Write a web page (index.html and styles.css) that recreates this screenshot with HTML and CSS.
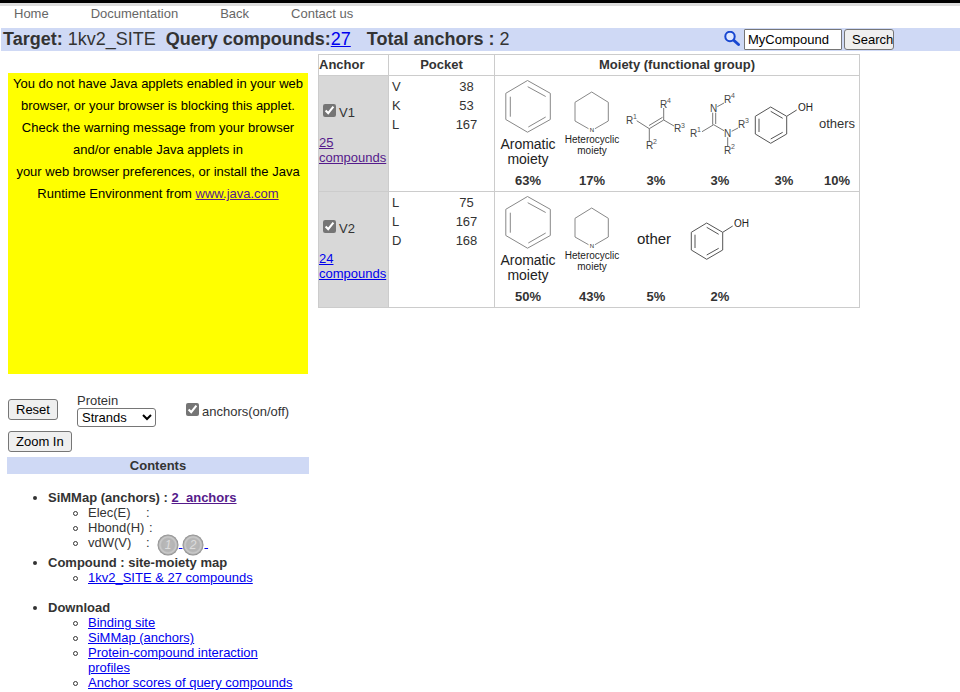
FILE: index.html
```html
<!DOCTYPE html>
<html lang="en">
<head>
<meta charset="utf-8">
<title>SiMMap - 1kv2_SITE</title>
<link rel="stylesheet" href="styles.css">
</head>
<body>
<svg class="defs" aria-hidden="true">
  <defs>
    <symbol id="aromatic" viewBox="0 0 64 90">
      <path class="bond light" d="M31.5 2.5 54.3 15.3V41.5L31.5 54.2 9.8 41.5V15.3ZM14.3 18.7v20M31.7 8.7 49.7 18.5M49.7 39 32.3 49"/>
      <text class="cap-lg" x="32" y="71">Aromatic</text>
      <text class="cap-lg" x="32" y="86">moiety</text>
    </symbol>
    <symbol id="heterocyclic" viewBox="0 0 64 90">
      <path class="bond light" d="M28.5 50.7 15 43V24.3L31.7 14 48.3 24.3V43L35 50.7"/>
      <text class="cap-xs" x="32" y="54">N</text>
      <text class="cap-sm" x="32" y="65">Heterocyclic</text>
      <text class="cap-sm" x="32" y="76">moiety</text>
    </symbol>
    <symbol id="alkene" viewBox="0 0 64 90">
      <path class="bond" d="M12.7 42.7 25.3 50.7 39.7 42V30M39.7 42 50 48M25.3 50.7V64M25 47.5 38.5 39.3"/>
      <text class="atom" x="2" y="46">R</text><text class="sup" x="9" y="41">1</text>
      <text class="atom" x="36" y="30">R</text><text class="sup" x="43" y="25">4</text>
      <text class="atom" x="50" y="54">R</text><text class="sup" x="57" y="50">3</text>
      <text class="atom" x="22" y="71">R</text><text class="sup" x="29" y="66">2</text>
    </symbol>
    <symbol id="amidine" viewBox="0 0 64 90">
      <path class="bond" d="M14 53.7 25.7 46.7 36 52.7M24.7 46.7v-12M27.7 46v-11.3M29.3 28.7 36 25M43.7 53.3 50 50M39.7 59.3v9.4"/>
      <text class="atom" x="22" y="34">N</text>
      <text class="atom" x="36" y="59">N</text>
      <text class="atom" x="2" y="59">R</text><text class="sup" x="9" y="54">1</text>
      <text class="atom" x="36" y="25">R</text><text class="sup" x="43" y="20">4</text>
      <text class="atom" x="50" y="50">R</text><text class="sup" x="57" y="45">3</text>
      <text class="atom" x="36" y="76">R</text><text class="sup" x="43" y="71">2</text>
    </symbol>
    <symbol id="phenol" viewBox="0 0 64 90">
      <path class="bond dark" d="M18.7 29 34.7 38.3V56L18.7 65.3 3.3 56V38.3ZM7 40.7V54M18.7 33.3 30.7 40.3M30.7 54.3 18.7 61M34.7 38.3 44.7 32"/>
      <text class="hydroxyl" x="46" y="33">OH</text>
    </symbol>
    <symbol id="other" viewBox="0 0 64 90">
      <text class="cap-xl" x="30" y="50">other</text>
    </symbol>
    <radialGradient id="coin">
      <stop offset="0" stop-color="#bbb"/>
      <stop offset=".6" stop-color="#b4b4b4"/>
      <stop offset=".78" stop-color="#ccc"/>
      <stop offset=".9" stop-color="#a4a4a4"/>
      <stop offset="1" stop-color="#858585"/>
    </radialGradient>
  </defs>
</svg>

<nav class="nav">
  <a href="#">Home</a>
  <a href="#">Documentation</a>
  <a href="#">Back</a>
  <a href="#">Contact us</a>
</nav>

<header class="summary">
  <div class="facts">
    <span><b>Target:</b> 1kv2_SITE</span>
    <span><b>Query compounds:</b><a href="#">27</a></span>
    <span class="anchors"><b>Total anchors :</b> 2</span>
  </div>
  <form class="search">
    <svg class="lens" viewBox="0 0 18 18" aria-hidden="true">
      <circle cx="7" cy="5.500" r="4.700" fill="#dfe8ff" stroke="#1746d1" stroke-width="2"/>
      <path d="M11 9.500 15.500 13.500" stroke="#1746d1" stroke-width="3" stroke-linecap="round"/>
    </svg>
    <input type="text" value="MyCompound" aria-label="Compound">
    <button type="button">Search</button>
  </form>
</header>

<main class="page">
  <aside class="side">
    <div class="applet">
      You do not have Java applets enabled in your web browser, or your browser is blocking this applet.<br>
      Check the warning message from your browser and/or enable Java applets in<br>
      your web browser preferences, or install the Java Runtime Environment from <a class="visited" href="#">www.java.com</a>
    </div>

    <form class="controls">
      <button type="button">Reset</button>
      <div class="protein">
        <label for="protein">Protein</label>
        <select id="protein"><option>Strands</option></select>
      </div>
      <div class="toggle">
        <input type="checkbox" id="toggle" checked><label for="toggle">anchors(on/off)</label>
      </div>
    </form>
    <button class="zoom" type="button">Zoom In</button>

    <h2 class="contents">Contents</h2>
    <ul class="tree">
      <li><b>SiMMap (anchors) : <a class="visited" href="#">2&nbsp; anchors</a></b>
        <ul>
          <li><span class="term">Elec(E)</span>:</li>
          <li><span class="term wide">Hbond(H)</span>:</li>
          <li class="coins"><span class="term">vdW(V)</span>:&nbsp; <a href="#"><svg class="coin" viewBox="0 0 22 22"><circle cx="11" cy="11" r="10.500" fill="url(#coin)"/><text x="11" y="15">1</text></svg>&nbsp;</a><a href="#"><svg class="coin" viewBox="0 0 22 22"><circle cx="11" cy="11" r="10.500" fill="url(#coin)"/><text x="11" y="15">2</text></svg>&nbsp;</a></li>
        </ul>
      </li>
      <li class="spaced"><b>Compound : site-moiety map</b>
        <ul>
          <li><a href="#">1kv2_SITE &amp; 27 compounds</a></li>
        </ul>
      </li>
      <li><b>Download</b>
        <ul>
          <li><a href="#">Binding site</a></li>
          <li><a href="#">SiMMap (anchors)</a></li>
          <li><a href="#">Protein-compound interaction<br>profiles</a></li>
          <li><a href="#">Anchor scores of query compounds</a></li>
        </ul>
      </li>
    </ul>
  </aside>

  <table class="map">
    <thead>
      <tr><th class="c-anchor">Anchor</th><th class="c-pocket">Pocket</th><th class="c-moiety">Moiety (functional group)</th></tr>
    </thead>
    <tbody>
      <tr>
        <td class="anchor">
          <div class="pick"><input type="checkbox" id="v1" checked><label for="v1">V1</label></div>
          <a class="visited" href="#">25 compounds</a>
        </td>
        <td class="pocket">
          <dl><dt>V</dt><dd>38</dd><dt>K</dt><dd>53</dd><dt>L</dt><dd>167</dd></dl>
        </td>
        <td class="moiety">
          <div class="groups">
            <figure><svg><use href="#aromatic"/></svg><figcaption>63%</figcaption></figure>
            <figure><svg><use href="#heterocyclic"/></svg><figcaption>17%</figcaption></figure>
            <figure><svg><use href="#alkene"/></svg><figcaption>3%</figcaption></figure>
            <figure><svg><use href="#amidine"/></svg><figcaption>3%</figcaption></figure>
            <figure><svg><use href="#phenol"/></svg><figcaption>3%</figcaption></figure>
            <figure class="rest"><span>others</span><figcaption>10%</figcaption></figure>
          </div>
        </td>
      </tr>
      <tr>
        <td class="anchor">
          <div class="pick"><input type="checkbox" id="v2" checked><label for="v2">V2</label></div>
          <a href="#">24 compounds</a>
        </td>
        <td class="pocket">
          <dl><dt>L</dt><dd>75</dd><dt>L</dt><dd>167</dd><dt>D</dt><dd>168</dd></dl>
        </td>
        <td class="moiety">
          <div class="groups">
            <figure><svg><use href="#aromatic"/></svg><figcaption>50%</figcaption></figure>
            <figure><svg><use href="#heterocyclic"/></svg><figcaption>43%</figcaption></figure>
            <figure><svg><use href="#other"/></svg><figcaption>5%</figcaption></figure>
            <figure><svg><use href="#phenol"/></svg><figcaption>2%</figcaption></figure>
          </div>
        </td>
      </tr>
    </tbody>
  </table>
</main>
</body>
</html>
```
FILE: styles.css
```css
* { box-sizing: border-box; }

body {
  margin: 0;
  border-top: 3px solid #000;
  background: #fff;
  color: #333;
  font: 13px/15px "Liberation Sans", Arial, sans-serif;
}

a { color: #00e; }
a.visited { color: #551a8b; }
.defs { position: absolute; width: 0; height: 0; }

button, input[type="text"], select {
  font: 13px/15px "Liberation Sans", Arial, sans-serif;
  color: #000;
  border: 1px solid #767676;
  border-radius: 3px;
}
button {
  height: 21px;
  padding: 0 7px;
  background: #efefef;
}
input[type="checkbox"] {
  width: 13px;
  height: 13px;
  margin: 0 3px 0 0;
  accent-color: #757575;
}

.nav {
  display: flex;
  gap: 42px;
  border-top: 3px solid #ddd;
  padding: 0 14px 7px;
}
.nav a { color: #666; text-decoration: none; }

.summary {
  display: flex;
  align-items: center;
  height: 23px;
  margin-left: 1px;
  padding-left: 2px;
  background: #cfd9f5;
}
.facts {
  display: flex;
  flex: 0 0 720px;
  gap: 10px;
  font-size: 18px;
  line-height: 20px;
  padding-bottom: 2px;
}
.anchors { margin-left: 6px; }
.search { display: flex; align-items: center; }
.lens { width: 18px; height: 18px; margin-right: 3px; }
.search input {
  width: 98px;
  height: 21px;
  margin-right: 2px;
  padding: 1px 3px;
  border-radius: 1px;
  background: #fff;
}
.search button {
  width: 50px;
  overflow: hidden;
  text-align: left;
}

.page {
  display: flex;
  align-items: flex-start;
  gap: 9px;
  padding: 3px 0 0 7px;
}
.side { flex: 0 0 302px; padding-top: 19px; }
.applet {
  height: 301px;
  margin: 0 0 19px;
  border: solid #fff;
  border-width: 0 1px;
  background: #ff0;
  color: #000;
  line-height: 22px;
  text-align: center;
}
.controls {
  display: flex;
  align-items: center;
  margin-left: 1px;
}
.controls button { margin-bottom: 2px; }
.protein { display: flex; flex-direction: column; margin: 0 30px 0 19px; }
.protein select {
  width: 79px;
  height: 19px;
  padding: 0;
  background: #fff;
}
.toggle, .pick { display: flex; align-items: center; }
.toggle input, .pick input { margin-bottom: 2px; }
.toggle label, .pick label { padding-top: 2px; }
.zoom { display: block; margin: 4px 0 5px 1px; }

.contents {
  margin: 0;
  background: #cfd9f5;
  font-size: 13px;
  line-height: 17px;
  text-align: center;
}
.tree { margin: 16px 0 0; padding-left: 41px; }
.tree, .tree ul { list-style: none; }
.tree ul { padding-left: 40px; }
.tree li::before {
  content: "";
  float: left;
  width: 4px;
  height: 4px;
  margin: 6px 0 0 -15px;
  border-radius: 50%;
  background: #333;
}
.tree ul li::before {
  width: 3px;
  height: 3px;
  border: 1px solid #333;
  background: none;
}
.term { display: inline-block; width: 58px; }
.term.wide { width: 61px; }
.coins { height: 20px; white-space: nowrap; }
.coin { width: 22px; height: 22px; margin: -5px 0 -9px; vertical-align: baseline; }
.coin text {
  fill: #ddd;
  font-size: 12px;
  font-style: italic;
  text-anchor: middle;
}
.spaced { margin-bottom: 15px; }

.map { border-collapse: collapse; flex: 0 0 542px; table-layout: fixed; width: 542px; }
.map th, .map td { border: 1px solid #ccc; padding: 0; }
.map th { height: 21px; padding-bottom: 2px; }
.c-anchor { width: 70px; text-align: left; }
.c-pocket { width: 106px; }
.anchor { background: #d8d8d8; }
.pick { margin: 0 0 15px 4px; }
.anchor > a { display: block; }
.pocket { vertical-align: top; }
.pocket dl {
  display: grid;
  grid-template-columns: 47px 55px;
  margin: 1px 0 0;
  padding-left: 3px;
  line-height: 19px;
}
.pocket dt, .pocket dd { margin: 0; }
.pocket dd { text-align: center; }
.groups { display: flex; padding: 2px 1px; }
figure { margin: 0; width: 64px; text-align: center; }
figure svg, .rest span { display: block; width: 64px; height: 90px; }
.rest, .rest span { width: 42px; }
.rest span { line-height: 92px; }
figcaption {
  padding-top: 5px;
  line-height: 16px;
  font-weight: bold;
}

.bond { fill: none; stroke: #777; stroke-width: 1; }
.bond.light { stroke: #888; }
.bond.dark { stroke: #555; }
.cap-lg, .cap-sm, .cap-xs, .cap-xl { text-anchor: middle; fill: #222; }
.cap-lg { font-size: 14px; }
.cap-sm { font-size: 10px; }
.cap-xs { font-size: 6px; }
.cap-xl { font-size: 15px; }
.atom { font-size: 10px; fill: #444; }
.sup { font-size: 7px; fill: #555; }
.hydroxyl { font-size: 10px; fill: #222; }
```
